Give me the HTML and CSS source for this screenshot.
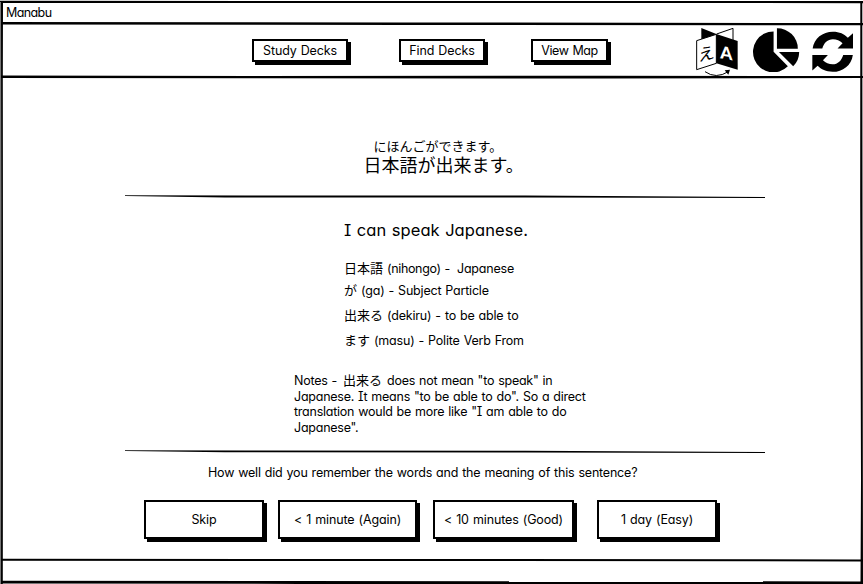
FILE: index.html
```html
<!DOCTYPE html>
<html lang="en">
<head>
<meta charset="utf-8">
<title>Manabu</title>
<link rel="stylesheet" href="styles.css">
</head>
<body>
<div class="window">
  <svg class="side" viewBox="0 0 863 584" aria-hidden="true">
    <path class="soft" d="M0 2H1.5L1 200 2 420 1 584H0Z"/>
    <path d="M1 1H3L2.8 80 3 300 2.8 584H1L1.3 300Z"/>
    <path d="M860.3 1H862.3L862.6 300 863 584H860.5L861 480 860.2 200Z"/>
  </svg>
  <svg class="rule" viewBox="0 0 863 4" preserveAspectRatio="none"><path d="M0 .8L400 1 863 1.1V3.2L600 3 300 3 0 2.9Z"/></svg>
  <header class="titlebar">Manabu</header>
  <svg class="rule" viewBox="0 0 863 4" preserveAspectRatio="none"><path d="M0 0L400 .4 863 1.1V3.2L400 3 0 2.6Z"/></svg>
  <nav class="nav">
    <button class="btn study">Study Decks</button>
    <button class="btn find">Find Decks</button>
    <button class="btn map">View Map</button>
    <div class="icons">
      <svg class="translate" viewBox="48 81 126 150">
        <path d="M64 84L109 102V118H64Z"/>
        <path class="line" d="M110 102L159 85V120"/>
        <path class="panel" d="M50 122L109 103V190L50 209Z"/>
        <path d="M109 102L173 123V209L109 190Z"/>
        <text class="kana" transform="translate(55 186) skewY(-15)">え</text>
        <text class="latin" transform="translate(121 175) skewY(10)">A</text>
        <path class="line" d="M75 215Q108 238 145 215"/>
        <path d="M134 211L150 209 145 224Z"/>
      </svg>
      <svg class="pie" viewBox="219 84 140 133">
        <path d="M281 94A61.5 61.5 0 1 0 324 199L281 155Z"/>
        <path d="M291 84A62 62 0 0 1 354 146H291Z"/>
        <path d="M297 156H358A61 61 0 0 1 340 199Z"/>
      </svg>
      <svg class="refresh" viewBox="394 92 125 125">
        <path id="half" d="M396 145C400 114 426 94 457 94C477 94 491 101 502 112L518 98V145H471L486 129C478 121 468 117 457 117C441 117 430 128 425 145Z"/>
        <use href="#half" transform="rotate(180 456.5 154.5)"/>
      </svg>
    </div>
  </nav>
  <svg class="rule" viewBox="0 0 863 4" preserveAspectRatio="none"><path d="M0 .5L250 1 600 .8 863 1V2.9L600 3.6 250 3.2 0 3Z"/></svg>
  <main class="card">
    <p class="reading" lang="ja">にほんごができます。</p>
    <p class="sentence" lang="ja">日本語が出来ます。</p>
    <svg class="divider" viewBox="0 0 640 4" preserveAspectRatio="none"><path d="M0 .2L120 .6 400 .6 640 2V3L400 2.6 100 2.5 0 1Z"/></svg>
    <h1 class="meaning">I can speak Japanese.</h1>
    <ul class="words">
      <li><span class="ja" lang="ja">日本語</span><span class="w1">(nihongo) -</span><span class="w2">Japanese</span></li>
      <li><span class="ja" lang="ja">が</span><span class="w3">(ga) - Subject Particle</span></li>
      <li><span class="ja" lang="ja">出来る</span><span class="w4">(dekiru) - to be able to</span></li>
      <li><span class="ja" lang="ja">ます</span><span class="w5">(masu) - Polite Verb From</span></li>
    </ul>
    <p class="notes">Notes - <span class="ja" lang="ja">出来る</span> does not mean "to speak" in<br>Japanese. It means "to be able to do". So a direct<br>translation would be more like "I am able to do<br>Japanese".</p>
    <svg class="divider lower" viewBox="0 0 640 4" preserveAspectRatio="none"><path d="M0 .2L120 .4 400 .8 640 2V3L400 2.6 100 2.2 0 1Z"/></svg>
    <p class="question">How well did you remember the words and the meaning of this sentence?</p>
    <div class="answers">
      <button class="btn skip">Skip</button>
      <button class="btn again">&lt; 1 minute (Again)</button>
      <button class="btn good">&lt; 10 minutes (Good)</button>
      <button class="btn easy">1 day (Easy)</button>
    </div>
  </main>
  <svg class="rule" viewBox="0 0 863 4" preserveAspectRatio="none"><path d="M0 .8L400 1 863 1.4V3.4L400 3 0 2.8Z"/></svg>
  <footer class="status"></footer>
  <svg class="rule base" viewBox="0 0 863 4" preserveAspectRatio="none"><path d="M0 .8L300 1 863 1.4V4L300 3.9 0 3.4Z"/></svg>
</div>
</body>
</html>
```
FILE: styles.css
```css
* { box-sizing: border-box; }
body { margin: 0; background: #fff; }
.window {
  position: relative;
  width: 863px;
  height: 584px;
  overflow: hidden;
  display: flex;
  flex-direction: column;
  color: #000;
  font: 430 12.5px/16px Inter, "Noto Sans CJK JP", sans-serif;
  font-feature-settings: "cv11", "cv08";
  letter-spacing: -0.13px;
  word-spacing: 0.7px;
}
.side { position: absolute; inset: 0; width: 863px; height: 584px; }
.soft { fill: #777; }
.rule { display: block; width: 863px; height: 4px; flex: none; }
.titlebar { height: 18px; padding: 0 6px; line-height: 18px; letter-spacing: -0.6px; }
.nav { height: 49px; display: flex; align-items: flex-start; padding: 12.5px 0 0 252px; }
.btn {
  font: inherit;
  font-feature-settings: inherit;
  letter-spacing: inherit;
  word-spacing: inherit;
  color: inherit;
  background: #fff;
  border: 2px solid #000;
  border-radius: 0;
  box-shadow: 3px 3px 0 #000;
  padding: 0;
  white-space: nowrap;
}
.nav .btn { height: 23px; padding-top: 1px; }
.study { width: 96px; }
.find { width: 86px; margin-left: 51px; }
.map { width: 77px; margin-left: 46px; }
.nav .map { letter-spacing: -0.4px; }
.icons { display: flex; margin: -12px 0 0 88px; }
.icons svg { display: block; flex: none; }
.translate { width: 42px; height: 50px; }
.pie { width: 46.5px; height: 44.5px; margin: 1px 0 0 15px; }
.refresh { width: 41.5px; height: 41.5px; margin: 4px 0 0 12px; }
.line { fill: none; stroke: #000; stroke-width: 3; }
.panel { fill: #fff; stroke: #000; stroke-width: 3; }
.kana { font: 400 50px "Noto Sans CJK JP", sans-serif; letter-spacing: 0; }
.latin { font: 900 52px Lato, sans-serif; fill: #fff; letter-spacing: 0; }
.card { height: 480px; padding: 58px 0 0; }
.card p, .card h1, .card ul { margin: 0; padding: 0; }
.reading, .sentence { font-family: "Noto Sans CJK JP", sans-serif; font-weight: 400; letter-spacing: 0; }
.card .reading { font-size: 13px; line-height: 17px; margin-left: 373.5px; }
.card .sentence { font-size: 18px; line-height: 20px; margin-left: 363.5px; }
.divider { display: block; width: 640px; height: 4px; margin: 21px 0 0 125px; }
.card .meaning { font-size: 16.5px; line-height: 22px; font-weight: 430; letter-spacing: 0.08px; margin: 20px 0 0 344px; }
.card .words { list-style: none; margin: 17px 0 0 344px; letter-spacing: -0.2px; }
.words li { display: flex; gap: 4px; line-height: 25px; }
.words li:first-child, .words li:nth-child(2) { line-height: 22px; }
.words li:nth-child(3) { margin-top: 1px; }
.ja { font-family: "Noto Sans CJK JP", sans-serif; font-size: 13px; font-weight: 400; letter-spacing: 0; line-height: inherit; }
.words .ja { margin-top: -1px; }
.w1 { letter-spacing: -0.35px; }
.w2 { margin-left: 3px; }
.card .notes { margin: 20px 0 0 294px; line-height: 15.7px; letter-spacing: -0.24px; white-space: nowrap; }
.notes .ja { line-height: 0; margin: 0 1px 0 2px; }
.lower { margin-top: 14px; }
.card .question { margin: 11px 0 0 208px; letter-spacing: -0.2px; }
.answers { display: flex; margin: 19px 0 0 144px; }
.answers .btn { height: 39px; padding-top: 1px; }
.skip { width: 120px; }
.again { width: 139px; margin-left: 14px; }
.good { width: 141px; margin-left: 16px; }
.easy { width: 120px; margin-left: 23px; }
.status { height: 18px; }
```
